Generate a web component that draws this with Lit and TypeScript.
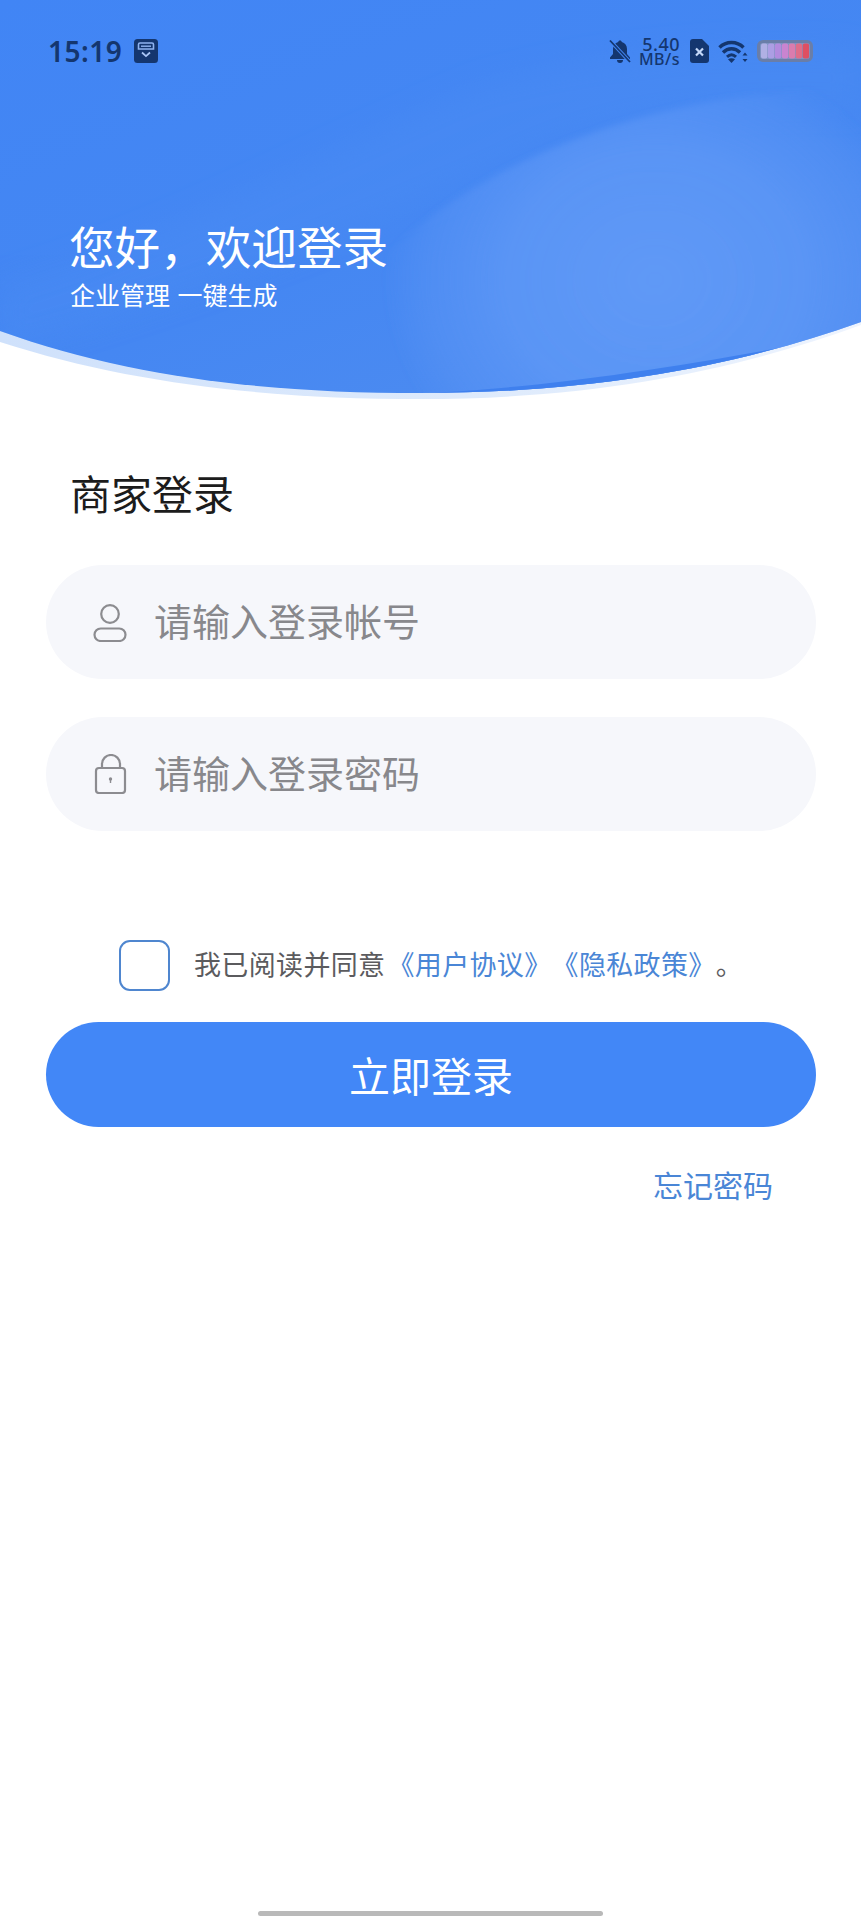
import { LitElement, html, css, svg } from "lit";
import { customElement } from "lit/decorators.js";

const batteryCells = ["#b0b0e4", "#ac9ee4", "#b28bde", "#c984d0", "#da7cae", "#df6d88", "#df4f62"];

@customElement("app-root")
export class AppRoot extends LitElement {
  static styles = css`
    :host {
      display: block;
      width: 861px;
      height: 1920px;
      background: #fff;
      font-family: "Noto Sans CJK SC", "Noto Sans", sans-serif;
      position: relative;
      overflow: hidden;
    }
    .hero {
      position: relative;
      height: 400px;
      box-sizing: border-box;
      padding: 35px 48px 0 48px;
    }
    .hero-bg {
      position: absolute;
      left: 0;
      top: 0;
      width: 861px;
      height: 400px;
    }
    .status {
      position: relative;
      display: flex;
      align-items: center;
      height: 32px;
      color: #14366f;
    }
    .time {
      font-family: "Noto Sans", sans-serif;
      font-size: 28px;
      font-weight: 600;
      line-height: 32px;
      letter-spacing: 0.5px;
      width: 86px;
    }
    .status svg { display: block; flex: none; }
    .status-right {
      margin-left: auto;
      display: flex;
      align-items: center;
    }
    .speed {
      font-family: "Noto Sans", sans-serif;
      font-weight: 500;
      width: 40px;
      margin: 0 10px 0 9px;
      display: flex;
      flex-direction: column;
      align-items: flex-end;
    }
    .speed b { font-weight: 500; font-size: 18px; line-height: 16px; letter-spacing: 0.5px; }
    .speed span { font-size: 16px; line-height: 15px; letter-spacing: 0.5px; }
    .gap-wifi { margin-left: 9px; }
    .gap-batt { margin-left: 9px; }
    .hello {
      position: relative;
      margin: 148px 0 0 21px;
      color: #fff;
    }
    .hello h1 {
      margin: 0;
      font-size: 45.6px;
      font-weight: 400;
      line-height: 60px;
    }
    .hello p {
      margin: 3px 0 0 1px;
      font-size: 25px;
      line-height: 32px;
      word-spacing: 2px;
    }
    .body {
      padding: 67px 45px 0 46px;
    }
    .title {
      margin: 0 0 48px 24px;
      font-size: 41px;
      font-weight: 400;
      line-height: 50px;
      color: #1c1c1c;
    }
    .field {
      display: flex;
      align-items: center;
      height: 114px;
      margin-bottom: 38px;
      border-radius: 57px;
      background: #f6f7fb;
      padding-left: 47px;
      color: #88888c;
      font-size: 38px;
    }
    .field span { padding-bottom: 6px; }
    .field svg { flex: none; width: 36px; height: 40px; margin-right: 25px; }
    .agree {
      display: flex;
      align-items: center;
      margin: 109px 0 0 73px;
      height: 51px;
      font-size: 27px;
      letter-spacing: 0.35px;
      color: #5b5b5e;
      text-spacing-trim: space-all;
    }
    .agree span { padding-bottom: 4px; white-space: nowrap; }
    .box {
      box-sizing: border-box;
      width: 51px;
      height: 51px;
      border: 2.5px solid #4f86cf;
      border-radius: 11px;
      margin-right: 24px;
      flex: none;
    }
    .agree em { font-style: normal; color: #4a86d6; margin-left: 2px; }
    .login {
      display: flex;
      align-items: center;
      justify-content: center;
      height: 105px;
      margin-top: 31px;
      border-radius: 52.5px;
      background: #4287f7;
      color: #fff;
      font-size: 41px;
      padding-bottom: 2px;
      box-sizing: border-box;
    }
    .forgot {
      margin: 37px 43px 0 0;
      text-align: right;
      font-size: 30px;
      line-height: 40px;
      color: #4a86d6;
    }
    .home {
      position: absolute;
      left: 258px;
      top: 1911px;
      width: 345px;
      height: 5px;
      border-radius: 3px;
      background: #b9b9b9;
    }
  `;

  private heroBg() {
    return html`<svg class="hero-bg" viewBox="0 0 861 400" aria-hidden="true">
      <defs>
        <radialGradient id="glow" gradientUnits="userSpaceOnUse" cx="0" cy="0" r="1" gradientTransform="translate(655 280) scale(270 235)">
          <stop offset="0" stop-color="#6099f6" stop-opacity="1"/>
          <stop offset="0.55" stop-color="#5d97f6" stop-opacity="0.85"/>
          <stop offset="0.85" stop-color="#5b95f5" stop-opacity="0.4"/>
          <stop offset="1" stop-color="#5b95f5" stop-opacity="0"/>
        </radialGradient>
        <linearGradient id="base" x1="0" y1="0" x2="0.8" y2="1">
          <stop offset="0" stop-color="#4185f5"/>
          <stop offset="0.6" stop-color="#4587f2"/>
          <stop offset="1" stop-color="#4e8cf0"/>
        </linearGradient>
        <linearGradient id="rim" x1="0" y1="0" x2="1" y2="0">
          <stop offset="0" stop-color="#cfe1fb"/>
          <stop offset="0.6" stop-color="#dfebfc"/>
          <stop offset="1" stop-color="#eef4fe"/>
        </linearGradient>
        <filter id="soft" x="-10%" y="-10%" width="120%" height="120%"><feGaussianBlur stdDeviation="3"/></filter>
        <filter id="softer" x="-10%" y="-20%" width="120%" height="140%"><feGaussianBlur stdDeviation="14"/></filter>
        <clipPath id="shape"><path d="M0 0H861V322C740 365 600 393 420 393C270 393 130 378 0 331Z"/></clipPath>
      </defs>
      <path d="M0 342C130 384 270 399 420 399C600 399 740 369 861 325V320H0Z" fill="url(#rim)"/>
      <g clip-path="url(#shape)">
        <rect width="861" height="400" fill="url(#base)"/>
        <path d="M0 285C170 235 300 160 480 85C610 50 760 40 861 50V110C720 100 590 120 500 170C400 210 200 300 0 350Z" fill="#4c8cf3" opacity="0.4" filter="url(#softer)"/>
        <path d="M360 285C430 195 570 125 720 100C780 92 830 88 880 88V420H280Z" fill="url(#glow)" filter="url(#soft)"/>
        <path d="M420 393C520 390 650 372 790 346V400H420Z" fill="#3f80ee"/>
      </g>
    </svg>`;
  }

  private statusBar() {
    return html`<div class="status">
      <span class="time">15:19</span>
      <svg width="24" height="24" viewBox="0 0 24 24">
        <rect width="24" height="24" rx="3.5" fill="#14366f"/>
        <path d="M4.500 10V5.500a1.500 1.500 0 0 1 1.500-1.500h12a1.500 1.500 0 0 1 1.500 1.500V10Z" fill="none" stroke="#8fb3ef" stroke-width="1.600"/>
        <path d="M8 13.500l4 3.600 4-3.600" fill="none" stroke="#a9c5f5" stroke-width="1.800"/>
        <rect x="7" y="6.500" width="10" height="1.400" fill="#8fb3ef"/>
      </svg>
      <div class="status-right">
        <svg width="22" height="24" viewBox="0 0 22 24">
          <path d="M11 1.500c-1 0-1.700.7-1.800 1.600C6 4 4 6.600 4 10v5l-3 3.600V20h20v-1.400L18 15v-5c0-3.400-2-6-5.200-6.900C12.700 2.200 12 1.500 11 1.500ZM8 21a3 3 0 0 0 6 0Z" fill="#14366f"/>
          <path d="M1 1.500 21 23" stroke="#4287f5" stroke-width="3.600"/>
          <path d="M1 1.500 21 23" stroke="#14366f" stroke-width="1.800"/>
        </svg>
        <div class="speed"><b>5.40</b><span>MB/s</span></div>
        <svg width="19" height="24" viewBox="0 0 19 24">
          <path d="M3 0H12L19 7V21a3 3 0 0 1-3 3H3a3 3 0 0 1-3-3V3a3 3 0 0 1 3-3Z" fill="#14366f"/>
          <path d="M6 9.500l7 7M13 9.500l-7 7" stroke="#c5d8f8" stroke-width="2.200"/>
        </svg>
        <svg class="gap-wifi" width="30" height="23" viewBox="0 0 30 23">
          <path d="M1.500 7.500C8 .8 19 .8 25.500 7.500" fill="none" stroke="#14366f" stroke-width="3.400"/>
          <path d="M5 12.500C10 7.500 17 7.500 22 12.500" fill="none" stroke="#14366f" stroke-width="3.400"/>
          <path d="M9 16.800C12 14 15 14 18 16.800" fill="none" stroke="#14366f" stroke-width="3"/>
          <path d="M13.500 23l-3.500-3.800c2-1.400 5-1.400 7 0Z" fill="#14366f"/>
          <path d="M27 12.500l-2.500 3h5ZM27 22l-2.500-3h5Z" fill="#14366f"/>
        </svg>
        <svg class="gap-batt" width="56" height="22" viewBox="0 0 56 22">
          <rect x="1.500" y="1.500" width="53" height="19" rx="4.500" fill="#7f93c2" stroke="#6a7ea8" stroke-width="3"/>
          ${batteryCells.map(
            (c, i) => svg`<rect x=${4 + i * 6.95} y="3.500" width="6.400" height="15" rx="2" fill=${c}/>`
          )}
        </svg>
      </div>
    </div>`;
  }

  render() {
    return html`
      <div class="hero">
        ${this.heroBg()}
        ${this.statusBar()}
        <div class="hello">
          <h1>您好，欢迎登录</h1>
          <p>企业管理 一键生成</p>
        </div>
      </div>
      <div class="body">
        <h2 class="title">商家登录</h2>
        <div class="field">
          <svg viewBox="0 0 36 40" fill="none" stroke="#8c8c90" stroke-width="2.200">
            <circle cx="17" cy="12" r="8.800"/>
            <rect x="1.500" y="26.500" width="31" height="12.500" rx="6.250"/>
          </svg>
          <span>请输入登录帐号</span>
        </div>
        <div class="field">
          <svg viewBox="0 0 36 40" fill="none" stroke="#8c8c90" stroke-width="2.200">
            <path d="M9 14V10a9 9 0 0 1 18 0V14"/>
            <rect x="3" y="14" width="29" height="25" rx="3"/>
            <circle cx="17.500" cy="25" r="1.700" fill="#8c8c90" stroke="none"/>
            <path d="M17.500 25v4" stroke-width="1.400"/>
          </svg>
          <span>请输入登录密码</span>
        </div>
        <div class="agree">
          <div class="box"></div>
          <span>我已阅读并同意<em>《用户协议》《隐私政策》</em>。</span>
        </div>
        <div class="login">立即登录</div>
        <div class="forgot">忘记密码</div>
      </div>
      <div class="home"></div>
    `;
  }
}
